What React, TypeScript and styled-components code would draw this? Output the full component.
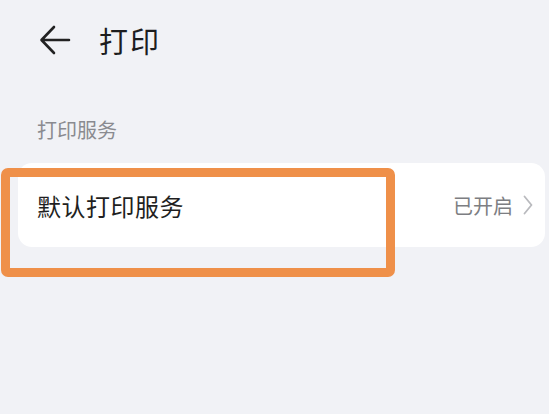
import React from "react";
import styled, { createGlobalStyle } from "styled-components";

const Global = createGlobalStyle`
  html, body { margin: 0; padding: 0; background: #f1f2f6; }
  body { font-family: "Noto Sans CJK SC", "Noto Sans", sans-serif; }
`;

const Page = styled.div`
  width: 549px;
  height: 414px;
  background: #f1f2f6;
  overflow: hidden;
  position: relative;
`;

const Header = styled.div`
  display: flex;
  align-items: center;
  height: 80px;
  padding-left: 38px;
`;

const BackButton = styled.div`
  width: 34px;
  height: 34px;
  display: flex;
  align-items: center;
  justify-content: center;
  margin-right: 27px;
`;

const Title = styled.h1`
  margin: 0;
  font-size: 29px;
  font-weight: 400;
  color: #1d1d1f;
  letter-spacing: 2px;
  line-height: 1;
`;

const SectionLabel = styled.div`
  padding: 37px 0 0 37px;
  height: 83px;
  box-sizing: border-box;
  font-size: 20px;
  line-height: 26px;
  color: #8a8b90;
`;

const CardWrap = styled.div`
  position: relative;
  margin: 0 4px 0 18px;
`;

const Card = styled.div`
  background: #ffffff;
  border-radius: 14px;
  height: 84px;
  display: flex;
  align-items: center;
  padding: 0 12px 0 19px;
`;

const RowTitle = styled.div`
  flex: 1;
  font-size: 24px;
  color: #1f1f22;
  letter-spacing: 0.5px;
`;

const RowValue = styled.div`
  display: flex;
  align-items: center;
  gap: 10px;
  font-size: 20px;
  color: #7d7e82;
`;

const Highlight = styled.div`
  position: absolute;
  left: -17px;
  top: 5px;
  width: 394px;
  height: 109px;
  box-sizing: border-box;
  border: 9px solid #ef9049;
  border-radius: 7px;
  pointer-events: none;
`;

export default function App() {
  return (
    <Page>
      <Global />
      <Header>
        <BackButton>
          <svg width="32" height="30" viewBox="0 0 32 30" fill="none">
            <path d="M30 15H3M15 2L2.5 15L15 28" stroke="#222" strokeWidth="2.6" strokeLinecap="round" strokeLinejoin="round" />
          </svg>
        </BackButton>
        <Title>打印</Title>
      </Header>
      <SectionLabel>打印服务</SectionLabel>
      <CardWrap>
        <Card>
          <RowTitle>默认打印服务</RowTitle>
          <RowValue>
            已开启
            <svg width="10" height="20" viewBox="0 0 10 20" fill="none">
              <path d="M1.5 1.5L8.5 10L1.5 18.5" stroke="#b9babe" strokeWidth="1.8" strokeLinecap="round" strokeLinejoin="round" />
            </svg>
          </RowValue>
        </Card>
        <Highlight />
      </CardWrap>
    </Page>
  );
}
